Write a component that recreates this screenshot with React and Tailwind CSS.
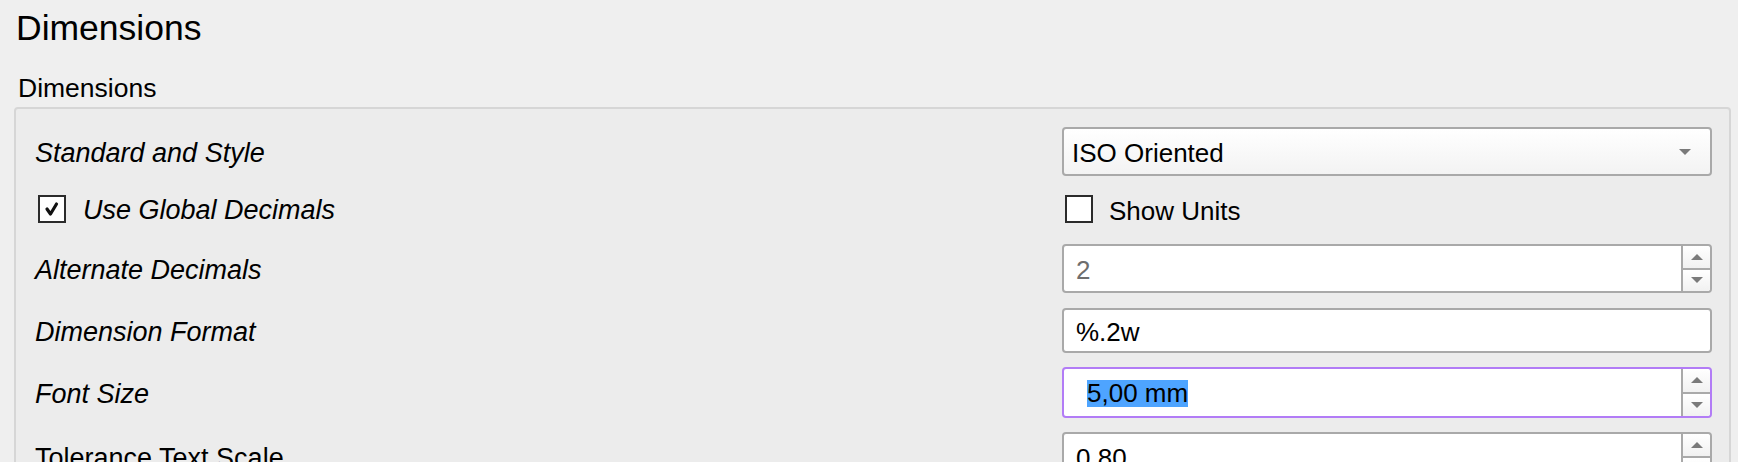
import React from 'react';

const font = { fontFamily: '"Liberation Sans", Arial, sans-serif' };

// small gray triangles used by combobox + spin buttons
const Tri = ({ up }) => (
    <svg width="12" height="6" viewBox="0 0 12 6" className="block">
        {up
            ? <polygon points="6,0 12,6 0,6" fill="#7a7a7a" />
            : <polygon points="0,0 12,0 6,6" fill="#7a7a7a" />}
    </svg>
);

const CheckBox = ({ checked }) => (
    <div className="w-[28px] h-[28px] border-2 border-[#2b2b2b] bg-white flex items-center justify-center flex-none">
        {checked && (
            <svg width="16" height="16" viewBox="0 0 16 16">
                <path d="M3 8 L6.5 13 L12.5 3" fill="none" stroke="#111" strokeWidth="3.2" strokeLinecap="round" strokeLinejoin="round" />
            </svg>
        )}
    </div>
);

const SpinButtons = () => (
    <div className="w-[29px] h-full flex flex-col border-l-2 border-[#a9a9a9] flex-none">
        <div className="flex-1 flex items-center justify-center bg-gradient-to-b from-white to-[#f1f1f1] rounded-tr-[3px]">
            <Tri up />
        </div>
        <div className="flex-1 flex items-center justify-center border-t-2 border-[#a9a9a9] bg-gradient-to-b from-white to-[#f1f1f1] rounded-br-[3px]">
            <Tri />
        </div>
    </div>
);

const SpinBox = ({ value, muted }) => (
    <div className="h-full border-2 border-[#a9a9a9] rounded-[4px] bg-white flex items-center overflow-hidden">
        <span className={`flex-1 pl-[12px] pt-[3px] text-[26px] leading-none ${muted ? 'text-[#6e6e6e]' : 'text-black'}`}>{value}</span>
        <SpinButtons />
    </div>
);

const Row = ({ label, italic = true, className, children }) => (
    <div className={`flex items-center ${className}`}>
        <div className={`flex-1 pl-[19px] pt-[3px] text-[27px] leading-none text-black ${italic ? 'italic' : ''}`}>{label}</div>
        <div className="w-[650px] h-full flex-none">{children}</div>
    </div>
);

export default function App() {
    return (
        <div className="w-[1738px] h-[462px] overflow-hidden bg-[#efefef] text-black" style={font}>

            {/* page title */}
            <div className="pl-[16px] pt-[8px] h-[40px] text-[35.5px] leading-[40px]">Dimensions</div>

            {/* group label */}
            <div className="pl-[18px] mt-[33px] h-[30px] text-[26.5px] leading-[30px]">Dimensions</div>

            {/* group box */}
            <div className="ml-[14px] mt-[4px] w-[1717px] h-[400px] border-2 border-[#d6d6d6] rounded-[4px] bg-[#ececec] pt-[18px] pr-[17px] flex flex-col">

                <Row label="Standard and Style" className="h-[49px]">
                    <div className="h-full border-2 border-[#a9a9a9] rounded-[4px] bg-gradient-to-b from-white to-[#f3f3f3] flex items-center pl-[8px] pr-[19px]">
                        <span className="flex-1 pt-[2px] text-[26px] leading-none">ISO Oriented</span>
                        <Tri />
                    </div>
                </Row>

                <div className="flex items-center h-[28px] mt-[19px]">
                    <div className="flex-1 flex items-center pl-[22px]">
                        <CheckBox checked />
                        <span className="ml-[17px] pt-[3px] text-[27px] leading-none italic">Use Global Decimals</span>
                    </div>
                    <div className="w-[650px] flex-none flex items-center pl-[3px]">
                        <CheckBox />
                        <span className="ml-[16px] pt-[3px] text-[26px] leading-none">Show Units</span>
                    </div>
                </div>

                <Row label="Alternate Decimals" className="h-[49px] mt-[21px]">
                    <SpinBox value="2" muted />
                </Row>

                <Row label="Dimension Format" className="h-[45px] mt-[15px]">
                    <div className="h-full border-2 border-[#a9a9a9] rounded-[4px] bg-white flex items-center pl-[12px]">
                        <span className="pt-[3px] text-[26px] leading-none">%.2w</span>
                    </div>
                </Row>

                <Row label="Font Size" className="h-[51px] mt-[14px]">
                    <div className="h-full border-2 border-[#b27cf6] rounded-[4px] bg-white flex items-center overflow-hidden">
                        <div className="flex-1 pl-[23px] pt-[4px]">
                            <span className="bg-[#4ea4ff] text-[26px] leading-[27px] inline-block">5,00 mm</span>
                        </div>
                        <SpinButtons />
                    </div>
                </Row>

                <Row label="Tolerance Text Scale" italic={false} className="h-[49px] mt-[14px]">
                    <SpinBox value="0,80" />
                </Row>

            </div>
        </div>
    );
}
